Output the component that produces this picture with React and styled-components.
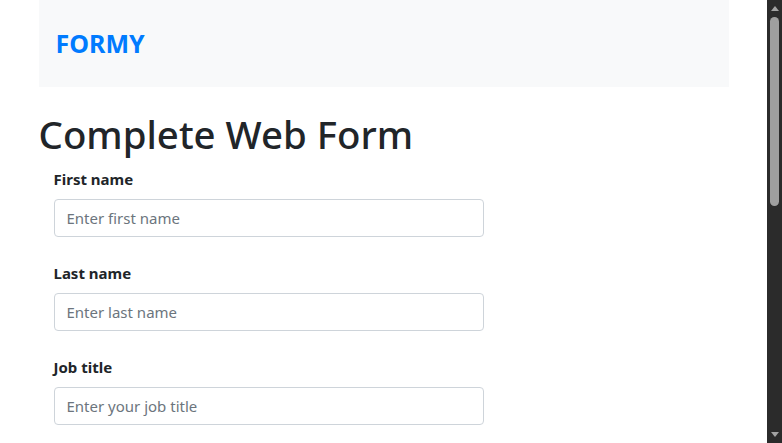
import React from 'react';
import styled, { createGlobalStyle } from 'styled-components';

const GlobalStyle = createGlobalStyle`
  html {
    background: #fff;
  }
  body {
    margin: 0 15px 0 0;
    background: #fff;
    color: #212529;
    font-family: "Segoe UI", "Noto Sans", "Liberation Sans", sans-serif;
    font-size: 16px;
    line-height: 1.5;
  }
  * {
    box-sizing: border-box;
  }
`;

const Container = styled.div`
  width: 690px;
  margin: 0 auto;
  padding-bottom: 40px;
`;

const Navbar = styled.nav`
  height: 87px;
  background: #f8f9fa;
  display: flex;
  align-items: center;
  padding: 0 17px;
`;

const Brand = styled.a`
  color: #007bff;
  font-size: 25px;
  font-weight: 700;
  text-decoration: none;
`;

const Title = styled.h1`
  margin: 24px 0 9px;
  font-size: 38.4px;
  font-weight: 500;
  line-height: 47px;
`;

const Form = styled.form`
  padding: 0 15px;
  display: flex;
  flex-direction: column;
  gap: 24px;
`;

const Group = styled.div`
  display: flex;
  flex-direction: column;
  gap: 8px;
  width: 430px;
`;

const Label = styled.label`
  font-weight: 700;
  font-size: 15px;
  line-height: 24px;
`;

const Input = styled.input`
  height: 38px;
  padding: 6px 12px;
  font: inherit;
  font-size: 15px;
  color: #495057;
  background: #fff;
  border: 1px solid #ced4da;
  border-radius: 4px;
  &::placeholder {
    color: #6c757d;
  }
`;

/* the window's scrollbar, as the reference shows it */
const ScrollTrack = styled.div`
  position: fixed;
  top: 0;
  right: 0;
  bottom: 0;
  width: 15px;
  background: #2b2b2b;
  display: flex;
  flex-direction: column;
  align-items: center;
`;

const Arrow = styled.div`
  width: 15px;
  height: 17px;
  display: flex;
  align-items: center;
  justify-content: center;
  &::before {
    content: '';
    border-left: 4px solid transparent;
    border-right: 4px solid transparent;
    ${(p) => (p.down ? 'border-top: 5px solid #a3a3a3;' : 'border-bottom: 5px solid #a3a3a3;')}
  }
`;

const Thumb = styled.div`
  width: 9px;
  height: 189px;
  border-radius: 5px;
  background: #9f9f9f;
`;

const Spacer = styled.div`
  flex: 1;
`;

const fields = [
  { id: 'first-name', label: 'First name', placeholder: 'Enter first name' },
  { id: 'last-name', label: 'Last name', placeholder: 'Enter last name' },
  { id: 'job-title', label: 'Job title', placeholder: 'Enter your job title' },
];

export default function App() {
  return (
    <>
      <GlobalStyle />
      <Container>
        <Navbar>
          <Brand href="#">FORMY</Brand>
        </Navbar>
        <Title>Complete Web Form</Title>
        <Form>
          {fields.map((f) => (
            <Group key={f.id}>
              <Label htmlFor={f.id}>{f.label}</Label>
              <Input id={f.id} type="text" placeholder={f.placeholder} />
            </Group>
          ))}
        </Form>
      </Container>
      <ScrollTrack>
        <Arrow />
        <Thumb />
        <Spacer />
        <Arrow down />
      </ScrollTrack>
    </>
  );
}
